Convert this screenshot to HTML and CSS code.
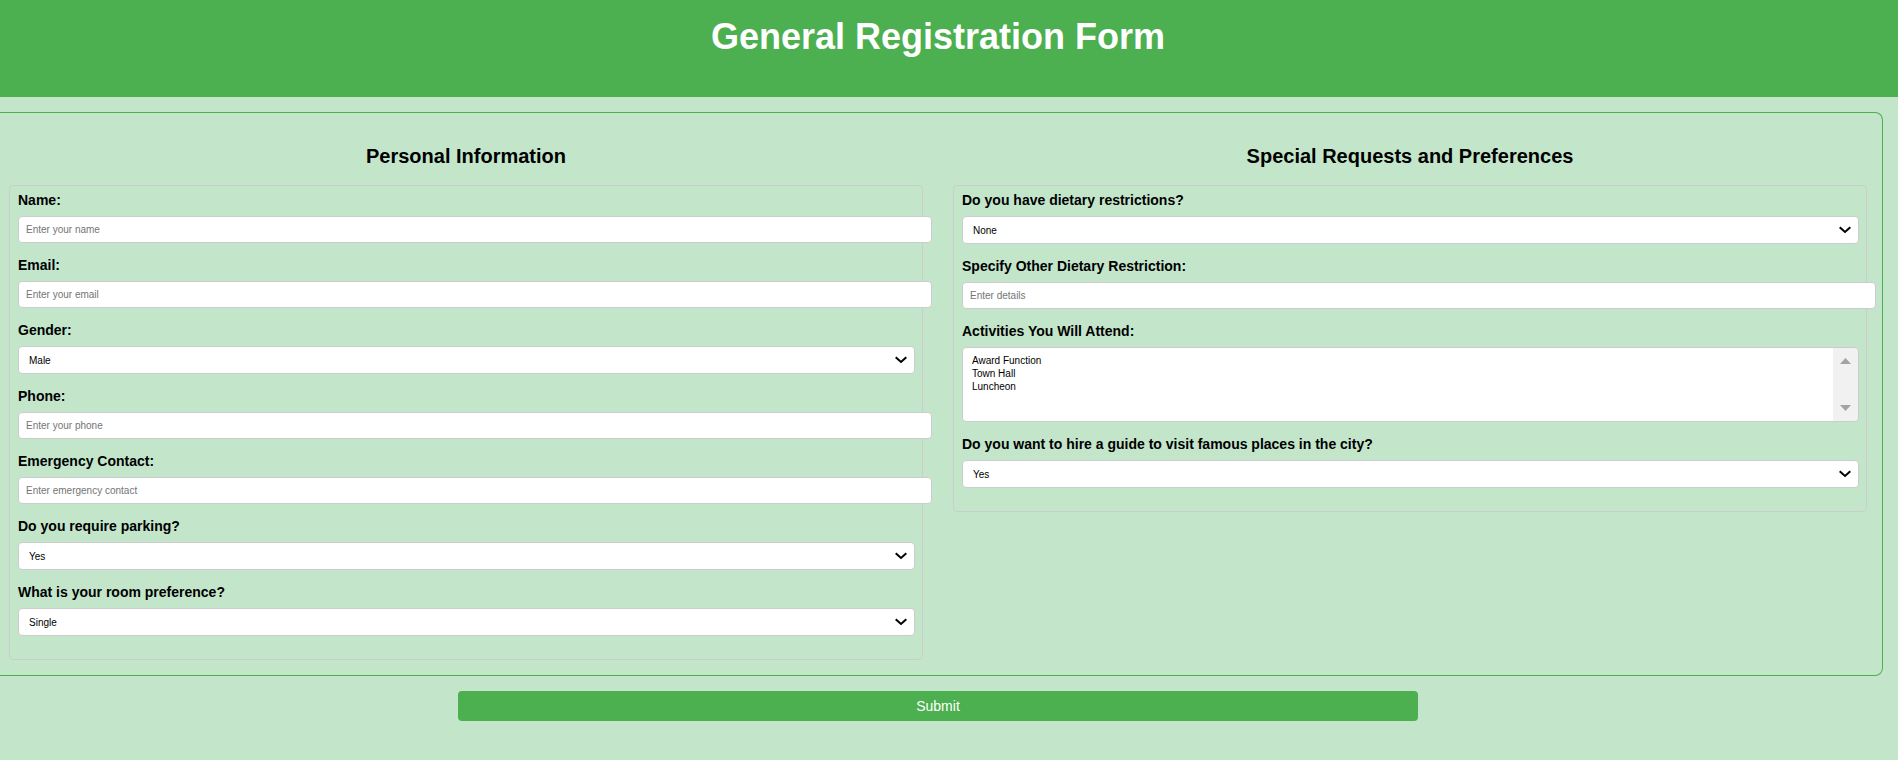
FILE: index.html
```html
<!DOCTYPE html>
<html lang="en">
<head>
<meta charset="utf-8">
<title>General Registration Form</title>
<link rel="stylesheet" href="styles.css">
</head>
<body>
<header class="page-header">
  <h1 class="page-title">General Registration Form</h1>
</header>
<form class="registration">
  <div class="card">
    <section class="column">
      <h2 class="column-title">Personal Information</h2>
      <div class="panel">
        <div class="field">
          <label class="label" for="name">Name:</label>
          <input class="input" type="text" id="name" placeholder="Enter your name">
        </div>
        <div class="field">
          <label class="label" for="email">Email:</label>
          <input class="input" type="email" id="email" placeholder="Enter your email">
        </div>
        <div class="field">
          <label class="label" for="gender">Gender:</label>
          <select class="select" id="gender"><option>Male</option><option>Female</option></select>
        </div>
        <div class="field">
          <label class="label" for="phone">Phone:</label>
          <input class="input" type="tel" id="phone" placeholder="Enter your phone">
        </div>
        <div class="field">
          <label class="label" for="emergency">Emergency Contact:</label>
          <input class="input" type="text" id="emergency" placeholder="Enter emergency contact">
        </div>
        <div class="field">
          <label class="label" for="parking">Do you require parking?</label>
          <select class="select" id="parking"><option>Yes</option><option>No</option></select>
        </div>
        <div class="field">
          <label class="label" for="room">What is your room preference?</label>
          <select class="select" id="room"><option>Single</option><option>Double</option></select>
        </div>
      </div>
    </section>
    <section class="column">
      <h2 class="column-title">Special Requests and Preferences</h2>
      <div class="panel">
        <div class="field">
          <label class="label" for="diet">Do you have dietary restrictions?</label>
          <select class="select" id="diet"><option>None</option><option>Other</option></select>
        </div>
        <div class="field">
          <label class="label" for="diet-other">Specify Other Dietary Restriction:</label>
          <input class="input" type="text" id="diet-other" placeholder="Enter details">
        </div>
        <div class="field">
          <label class="label" for="activities">Activities You Will Attend:</label>
          <select class="listbox" id="activities" multiple size="4">
            <option>Award Function</option>
            <option>Town Hall</option>
            <option>Luncheon</option>
          </select>
        </div>
        <div class="field">
          <label class="label" for="guide">Do you want to hire a guide to visit famous places in the city?</label>
          <select class="select" id="guide"><option>Yes</option><option>No</option></select>
        </div>
      </div>
    </section>
  </div>
  <div class="actions">
    <button class="submit" type="submit">Submit</button>
  </div>
</form>
</body>
</html>
```
FILE: styles.css
```css
body {
  margin: 0;
  background: #c3e6cb;
  color: #000;
  font-family: "Liberation Sans", Arial, sans-serif;
}

.page-header {
  padding: 17px 22px 40px 0;
  background: #4caf50;
  color: #fff;
  text-align: center;
}

.page-title {
  margin: 0;
  font-size: 36px;
  line-height: 40px;
}

.registration {
  margin: 15px 0 0;
}

.card {
  display: grid;
  grid-template-columns: 1fr 1fr;
  align-items: start;
  gap: 30px;
  margin-right: 15px;
  padding: 32px 15px 15px 9px;
  border: 1px solid #4caf50;
  border-left: 0;
  border-radius: 0 8px 8px 0;
}

.column {
  min-width: 0;
}

.column-title {
  margin: 0 0 17px;
  font-size: 20px;
  line-height: 23px;
  text-align: center;
}

.panel {
  padding: 6px 7px 8px 8px;
  border: 1px solid #ccc;
  border-radius: 4px;
}

.field {
  margin-bottom: 14px;
}

.field:last-child {
  margin-bottom: 15px;
}

.label {
  display: block;
  margin-bottom: 8px;
  font-size: 14px;
  font-weight: bold;
  line-height: 16px;
}

.input,
.select,
.listbox {
  display: block;
  width: 100%;
  margin: 0;
  border: 1px solid #ccc;
  border-radius: 4px;
  background-color: #fff;
  color: #000;
  font-family: inherit;
  font-size: 10px;
}

/* Text boxes add padding and border outside their full width. */
.input {
  box-sizing: content-box;
  height: 11px;
  padding: 7px 8px 7px 7px;
}

.input::placeholder {
  color: #757575;
}

.select {
  box-sizing: border-box;
  height: 28px;
  padding: 0 30px 0 10px;
  appearance: none;
  background-image: url("data:image/svg+xml,%3Csvg xmlns='http://www.w3.org/2000/svg' width='12' height='8' viewBox='0 0 12 8'%3E%3Cpath d='M.7 1.2 6 6l5.300-4.800' fill='none' stroke='%23000' stroke-width='2'/%3E%3C/svg%3E");
  background-position: right 7px center;
  background-repeat: no-repeat;
}

.listbox {
  box-sizing: border-box;
  height: 75px;
  padding: 7px;
  overflow: hidden;
  background-image:
    url("data:image/svg+xml,%3Csvg xmlns='http://www.w3.org/2000/svg' width='11' height='6'%3E%3Cpath d='M0 6 5.500 0 11 6z' fill='%23a3a3a3'/%3E%3C/svg%3E"),
    url("data:image/svg+xml,%3Csvg xmlns='http://www.w3.org/2000/svg' width='11' height='6'%3E%3Cpath d='M0 0 5.500 6 11 0z' fill='%23a3a3a3'/%3E%3C/svg%3E"),
    linear-gradient(#f1f1f1, #f1f1f1);
  background-position: right 7px top 10px, right 7px bottom 10px, right top;
  background-size: auto, auto, 25px 100%;
  background-repeat: no-repeat;
}

.listbox option {
  min-height: 13px;
  padding: 0 2px;
  line-height: 13px;
}

.actions {
  display: flex;
  justify-content: center;
  padding: 15px 22px 15px 0;
}

.submit {
  width: 100%;
  max-width: 960px;
  height: 30px;
  padding: 0;
  border: 0;
  border-radius: 4px;
  background: #4caf50;
  color: #fff;
  font-family: inherit;
  font-size: 14px;
}
```
